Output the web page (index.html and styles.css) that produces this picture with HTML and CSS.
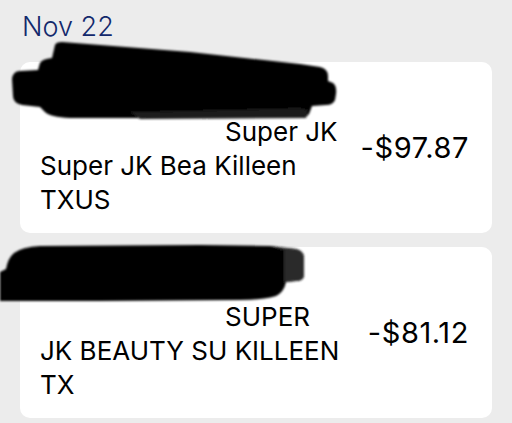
FILE: index.html
```html
<!DOCTYPE html>
<html>
<head>
<meta charset="utf-8">
<link rel="stylesheet" href="styles.css">
</head>
<body>
<div class="page">
  <div class="date">Nov 22</div>
  <div class="card">
    <div class="desc">
      <div class="line indent">Super JK</div>
      <div class="line">Super JK Bea Killeen</div>
      <div class="line">TXUS</div>
    </div>
    <div class="amount">-$97.87</div>
  </div>
  <div class="card">
    <div class="desc">
      <div class="line indent">SUPER</div>
      <div class="line">JK BEAUTY SU KILLEEN</div>
      <div class="line">TX</div>
    </div>
    <div class="amount">-$81.12</div>
  </div>
</div>
<svg class="scribble" width="512" height="423" viewBox="0 0 512 423">
  <defs>
    <filter id="soft" x="-5%" y="-20%" width="110%" height="140%">
      <feGaussianBlur stdDeviation="1.1"/>
    </filter>
  </defs>
  <g filter="url(#soft)">
    <path fill="#000" d="M55,45 Q56,42 62,42 L190,52 L300,64 L320,67 Q328,69 328,76 L328,81 L333,83 Q337,86 336,94 L335,100 Q333,105 326,105 L312,106 L309,114 Q306,118 298,118 L240,117 L180,116 L140,118 L70,118 Q50,117 45,112 L40,107 L22,105 Q13,103 13,96 L12,79 Q13,71 20,71 L38,70 L40,63 Q42,59 52,58 Z"/>
    <path fill="#1a1a1a" d="M130,112 L300,108 L308,110 L306,118 L140,119 Z"/>
    <path fill="#000" d="M0,272 L6,269 Q8,258 14,253 Q22,247 40,246 L200,245 L270,246 L296,249 Q304,251 304,258 L304,276 Q303,281 296,281 L286,282 Q284,292 276,296 Q262,300 240,300 L100,301 L0,301 Z"/>
    <path fill="#2a2a2a" d="M270,247 L296,249 Q304,251 304,258 L304,276 Q303,281 296,281 L284,282 L284,250 Z"/>
  </g>
</svg>
</body>
</html>
```
FILE: styles.css
```css
html, body {
  margin: 0;
  padding: 0;
  background: #ececec;
}
body {
  width: 512px;
  height: 423px;
  overflow: hidden;
  position: relative;
  font-family: Inter, "Noto Sans", sans-serif;
  color: #000;
}
.page {
  padding: 11px 20px 0 20px;
}
.date {
  font-size: 27px;
  line-height: 32px;
  font-weight: 300;
  color: #13296c;
  padding-left: 2px;
  margin-bottom: 19px;
}
.card {
  background: #fff;
  border-radius: 10px;
  display: flex;
  align-items: center;
  justify-content: space-between;
  padding: 53px 23px 16px 20px;
  margin-bottom: 14px;
}
.desc {
  font-size: 26px;
  line-height: 34px;
  width: 310px;
}
.indent {
  padding-left: 185px;
}
.line {
  white-space: nowrap;
}
.amount {
  font-size: 29px;
  letter-spacing: 0.6px;
  margin-top: -37px;
}
.scribble {
  position: absolute;
  left: 0;
  top: 0;
  pointer-events: none;
}
```
